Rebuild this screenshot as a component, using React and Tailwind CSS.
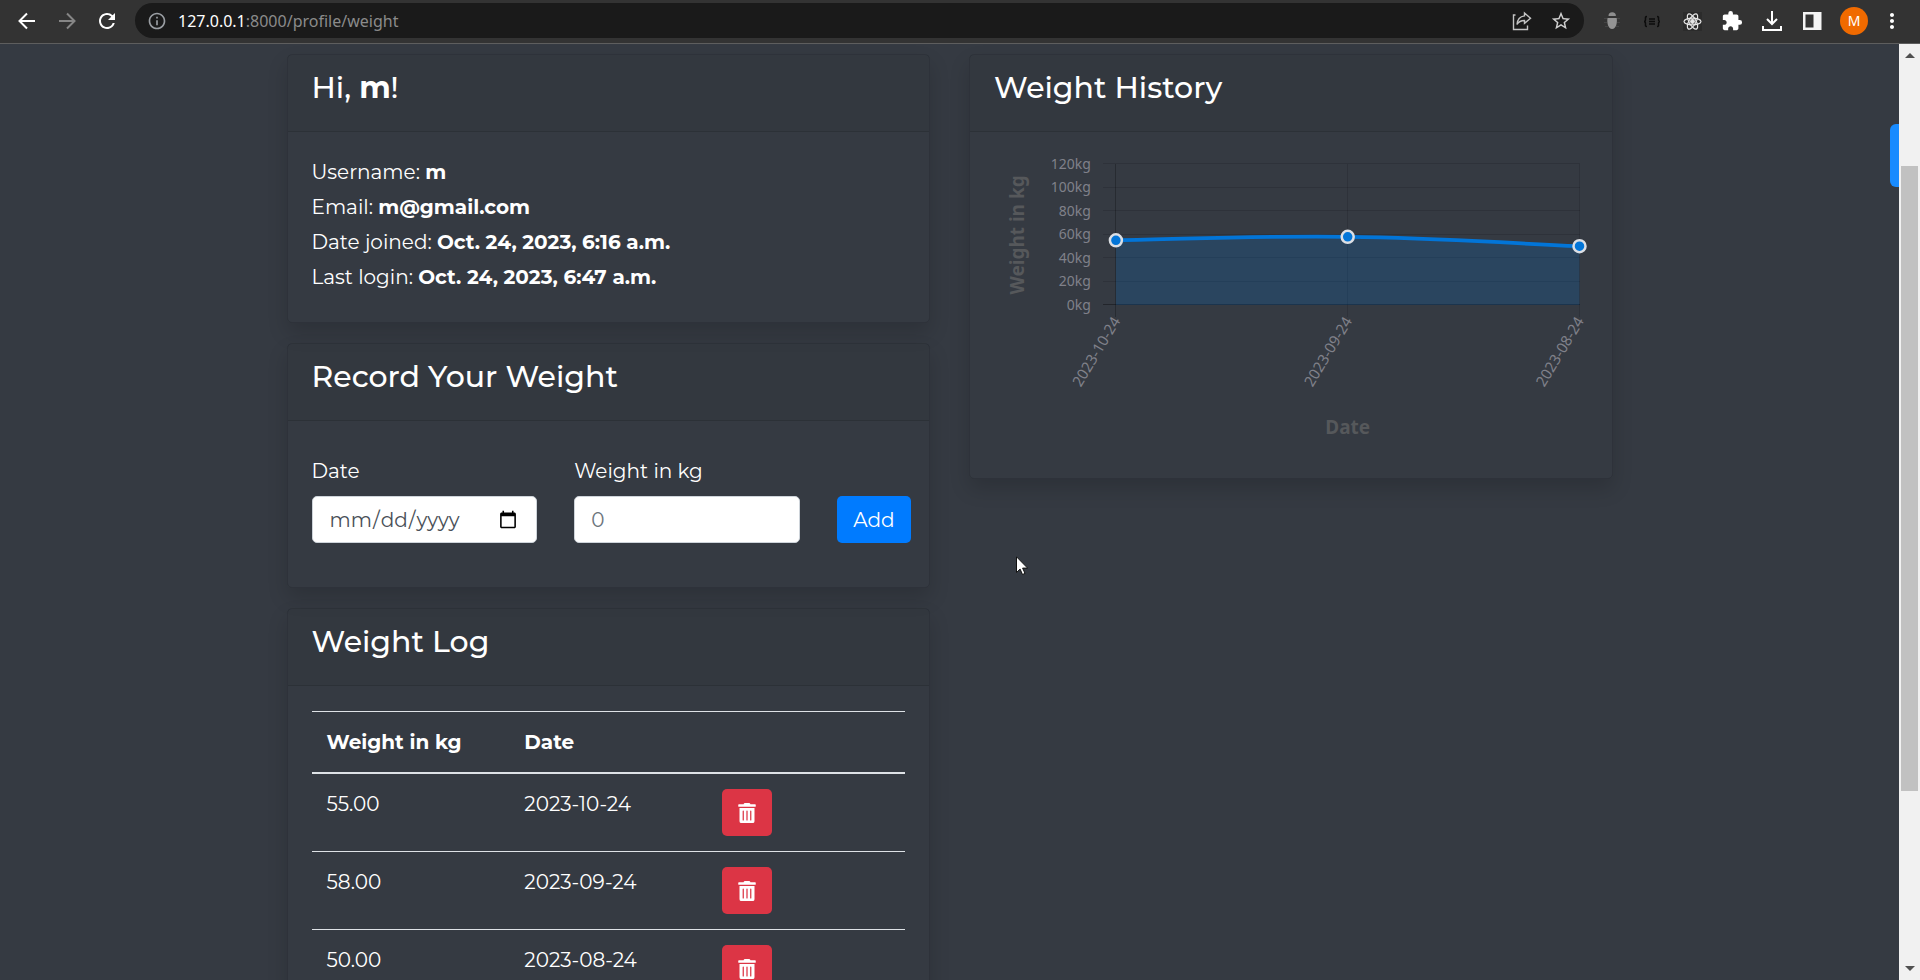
import { FaTrashAlt } from "react-icons/fa";
import {
  MdRefresh,
  MdInfoOutline,
  MdStarBorder,
  MdExtension,
  MdMoreVert,
} from "react-icons/md";

const entries = [
  { weight: 55, date: "2023-10-24" },
  { weight: 58, date: "2023-09-24" },
  { weight: 50, date: "2023-08-24" },
];

const account = [
  ["Username", "m"],
  ["Email", "m@gmail.com"],
  ["Date joined", "Oct. 24, 2023, 6:16 a.m."],
  ["Last login", "Oct. 24, 2023, 6:47 a.m."],
];

function BrowserBar() {
  return (
    <header className="flex h-11 shrink-0 items-center border-b border-[#5e5e5e] bg-[#333333] pr-5 pb-[2px] pl-[15px] font-['Noto_Sans',sans-serif] text-white">
      <nav className="flex items-center gap-4">
        <button aria-label="Back" className="flex size-6 items-center justify-center">
          <svg viewBox="0 0 24 24" className="size-6" fill="none" stroke="currentColor" strokeWidth="2">
            <path d="M20 12H5M12 4.5L4.5 12l7.5 7.5" />
          </svg>
        </button>
        <button aria-label="Forward" className="flex size-6 items-center justify-center text-[#868686]">
          <svg viewBox="0 0 24 24" className="size-6" fill="none" stroke="currentColor" strokeWidth="2">
            <path d="M4 12h15M12 4.5l7.5 7.5-7.5 7.5" />
          </svg>
        </button>
        <button aria-label="Reload" className="flex size-6 items-center justify-center">
          <MdRefresh className="size-6" />
        </button>
      </nav>
      <div className="ml-4 flex h-[35px] flex-1 items-center rounded-full bg-[#1a1a1a] px-3">
        <MdInfoOutline className="size-5 text-[#9a9ea3]" />
        <div role="textbox" aria-label="Address" className="ml-[11px] flex-1 text-base text-[#8b8b8b]">
          <span className="text-white">127.0.0.1</span>:8000/profile/weight
        </div>
        <button aria-label="Share">
          <svg viewBox="0 0 20 20" className="size-5" fill="none" stroke="#c4c4c4" strokeWidth="1.4">
            <path d="M3.500 4H1.500V18.500H15.500V14.500" />
            <path d="M12.500 2L18.500 7.200L12.500 12.300V9.500C9 9.500 6.500 10.800 5 13.500C5.300 9 8 5.500 12.500 4.900Z" />
          </svg>
        </button>
        <button aria-label="Bookmark" className="ml-[18px]">
          <MdStarBorder className="size-[22px] text-[#d0d0d0]" />
        </button>
      </div>
      <div className="ml-4 flex items-center gap-4">
        <svg viewBox="0 0 24 24" className="size-6">
          <path d="M8.500 7a3.700 3.700 0 0 1 7.400 0z" fill="#8e8e8e" />
          <path d="M7.500 9h9.200c.8 5-.8 11-4.600 11S6.700 14 7.500 9z" fill="#949494" />
          <path d="M4 9.500h3M17 9.500h3M4 13.500h3M17 13.500h3M5 17.500h3M16 17.500h3" stroke="#444" />
        </svg>
        <svg viewBox="0 0 24 24" className="size-6" fill="none" stroke="#0c0c0c" strokeWidth="1.500">
          <path d="M7 7.500c-2 0-1.500 1.500-1.500 2.700S5 12.500 4 12.500c1 0 1.500 1 1.500 2.300S5 17.500 7 17.500M17 7.500c2 0 1.500 1.500 1.500 2.700s.5 2.300 1.500 2.300c-1 0-1.500 1-1.500 2.300s.5 2.700-1.500 2.700M9 10h6M9 12.500h6M9 15h6" />
        </svg>
        <svg viewBox="0 0 24 24" className="size-6" fill="none" stroke="#e6e6e6" strokeWidth="1.200">
          <rect x="3" y="3" width="19" height="19" fill="#2b2b2b" stroke="none" />
          <ellipse cx="12.500" cy="12.500" rx="8.500" ry="3.400" />
          <ellipse cx="12.500" cy="12.500" rx="8.500" ry="3.400" transform="rotate(60 12.500 12.500)" />
          <ellipse cx="12.500" cy="12.500" rx="8.500" ry="3.400" transform="rotate(120 12.500 12.500)" />
          <circle cx="12.500" cy="12.500" r="1.800" fill="#e6e6e6" />
        </svg>
        <MdExtension className="size-6 p-px" />
        <svg viewBox="0 0 24 24" className="size-6" fill="none" stroke="currentColor" strokeWidth="2">
          <path d="M12 2v13M7 10l5 5 5-5M3 17v4h18v-4" />
        </svg>
        <svg viewBox="0 0 24 24" className="size-6">
          <path fillRule="evenodd" d="M3 3h18.500v18H3zM5.500 5.500v13h8v-13z" fill="#f4f4f4" />
        </svg>
        <button className="flex size-7 items-center justify-center rounded-full bg-[#f06a00] text-sm">
          M
        </button>
        <MdMoreVert className="-mx-1 size-6" />
      </div>
    </header>
  );
}

function Card({ title, bodyClass = "px-[24px] py-[25px]", children }) {
  return (
    <section className="rounded-[5px] border border-black/12 shadow-[0_10px_20px_rgba(0,0,0,0.15)]">
      <div className="border-b border-black/12 bg-black/3 px-[24px] py-[15px]">
        <h3 className="mb-[10px] text-[30px] leading-9 font-medium">{title}</h3>
      </div>
      <div className={bodyClass}>{children}</div>
    </section>
  );
}

const LEFT = 122;
const STEP = 232;
const BASE = 148;
const yFor = (kg) => BASE - (kg * 141) / 120;

function WeightChart() {
  const pts = entries.map((e, i) => [LEFT + i * STEP, yFor(e.weight)]);
  const [a, b, c] = pts;
  const line = `M${a[0]} ${a[1]}C${a[0] + 93} ${a[1] - 2} ${b[0] - 93} ${b[1] - 1} ${b[0]} ${b[1]}C${b[0] + 93} ${b[1] + 1} ${c[0] - 93} ${c[1] - 4} ${c[0]} ${c[1]}`;
  return (
    <svg
      viewBox="0 0 594 296"
      className="block h-auto w-full overflow-visible font-['Noto_Sans',sans-serif]"
      role="img"
      aria-label="Weight in kg by date"
    >
      <g stroke="#000" strokeOpacity="0.12" shapeRendering="crispEdges">
        {[0, 20, 40, 60, 80, 100, 120].map((kg) => (
          <line key={kg} x1="109" x2="586" y1={yFor(kg)} y2={yFor(kg)} strokeOpacity={kg ? 0.12 : 0.35} />
        ))}
        {pts.map(([x], i) => (
          <line key={x} x1={x} x2={x} y1="7" y2="160" strokeOpacity={i ? 0.12 : 0.25} />
        ))}
      </g>
      <path d={`${line}V${BASE}H${LEFT}Z`} fill="#0275d8" fillOpacity="0.2" />
      <path d={line} fill="none" stroke="#0275d8" strokeWidth="3.750" />
      {pts.map(([x, y]) => (
        <circle key={x} cx={x} cy={y} r="6" fill="#0275d8" stroke="#dcdfe4" strokeWidth="2.500" />
      ))}
      <g fill="#80818a" textAnchor="end">
        {[0, 20, 40, 60, 80, 100, 120].map((kg) => (
          <text key={kg} x="97" y={yFor(kg) + 5} fontSize="14">{kg}kg</text>
        ))}
        {pts.map(([x], i) => (
          <text key={x} transform={`translate(${x + 5} 164) rotate(-59)`} fontSize="15">
            {entries[i].date}
          </text>
        ))}
      </g>
      <g fill="#56585b" fontSize="19" fontWeight="700" textAnchor="middle">
        <text x="354" y="277">Date</text>
        <text transform="translate(30 78) rotate(-90)">Weight in kg</text>
      </g>
    </svg>
  );
}

function RecordForm() {
  const field =
    "h-[47px] w-full rounded-[5px] border border-[#ced4da] bg-white px-4 text-xl text-[#495057] placeholder:text-[#6c757d]";
  return (
    <form className="flex items-end gap-[37px]" onSubmit={(e) => e.preventDefault()}>
      <div className="min-w-0 flex-1">
        <label htmlFor="date" className="mb-[10px] block leading-[30px]">Date</label>
        <input id="date" type="date" className={field} />
      </div>
      <div className="min-w-0 flex-1">
        <label htmlFor="weight" className="mb-[10px] block leading-[30px]">Weight in kg</label>
        <input id="weight" type="number" placeholder="0" className={field} />
      </div>
      <button className="h-[47px] w-[74px] rounded-[5px] bg-[#007bff]">Add</button>
    </form>
  );
}

function WeightLog() {
  return (
    <table className="w-full table-fixed border-separate border-spacing-0 text-left leading-[30px]">
      <thead>
        <tr className="*:border-t *:border-b-2 *:border-[#dee2e6] *:p-[15px]">
          <th>Weight in kg</th>
          <th>Date</th>
          <th aria-label="Delete" />
        </tr>
      </thead>
      <tbody>
        {entries.map((e, i) => (
          <tr
            key={e.date}
            className={
              i
                ? "*:border-t *:border-[#dee2e6] *:p-[15px] *:align-top"
                : "*:p-[15px] *:align-top"
            }
          >
            <td>{e.weight.toFixed(2)}</td>
            <td>{e.date}</td>
            <td>
              <button
                aria-label={`Delete ${e.date}`}
                className="flex h-[47px] w-[50px] items-center justify-center rounded-[5px] bg-[#dc3545]"
              >
                <FaTrashAlt className="size-5" />
              </button>
            </td>
          </tr>
        ))}
      </tbody>
    </table>
  );
}

function Scrollbar() {
  return (
    <div className="flex w-[21px] shrink-0 flex-col items-center bg-[#f1f1f1] py-[9px]">
      <svg viewBox="0 0 10 5" className="h-[5px] w-[10px]"><path d="M0 5L5 0l5 5z" fill="#505050" /></svg>
      <div className="flex w-full flex-1 flex-col px-[2px] py-[7px]">
        <div className="grow-[101]" />
        <div className="grow-[625] bg-[#c1c1c1]" />
        <div className="grow-[168]" />
      </div>
      <svg viewBox="0 0 10 5" className="h-[5px] w-[10px]"><path d="M0 0l5 5 5-5z" fill="#505050" /></svg>
    </div>
  );
}

export default function App() {
  return (
    <div className="flex h-screen flex-col overflow-hidden">
      <BrowserBar />
      <div className="relative flex min-h-0 flex-1">
        <main className="min-w-0 flex-1 overflow-hidden bg-[#353a42] px-6 pt-[10px] font-[Montserrat,Inter,sans-serif] text-xl text-white">
          <div className="mx-auto grid max-w-[1326px] grid-cols-2 items-start gap-[39px]">
            <div className="flex flex-col gap-5">
              <Card title={<>Hi, <strong className="font-bold">m</strong>!</>}>
                {account.map(([label, value]) => (
                  <p key={label} className="mb-[5px] leading-[30px]">
                    {label}: <strong className="font-bold">{value}</strong>
                  </p>
                ))}
              </Card>
              <Card title="Record Your Weight" bodyClass="pt-[35px] pr-[18px] pb-[44px] pl-[24px]">
                <RecordForm />
              </Card>
              <Card title="Weight Log">
                <WeightLog />
              </Card>
            </div>
            <Card title="Weight History">
              <WeightChart />
            </Card>
          </div>
        </main>
        <button aria-label="Open side panel" className="absolute top-20 right-[21px] h-[63px] w-[9px] rounded-l-md bg-[#188bff]" />
        <Scrollbar />
        <svg viewBox="0 0 12 19" className="absolute top-[512px] left-[1016px] h-[19px] w-3">
          <path d="M.5.8v15.700l3.600-3.400 2.400 5.400 2.500-1.100-2.400-5.300h5z" fill="#fff" stroke="#111" />
        </svg>
      </div>
    </div>
  );
}
